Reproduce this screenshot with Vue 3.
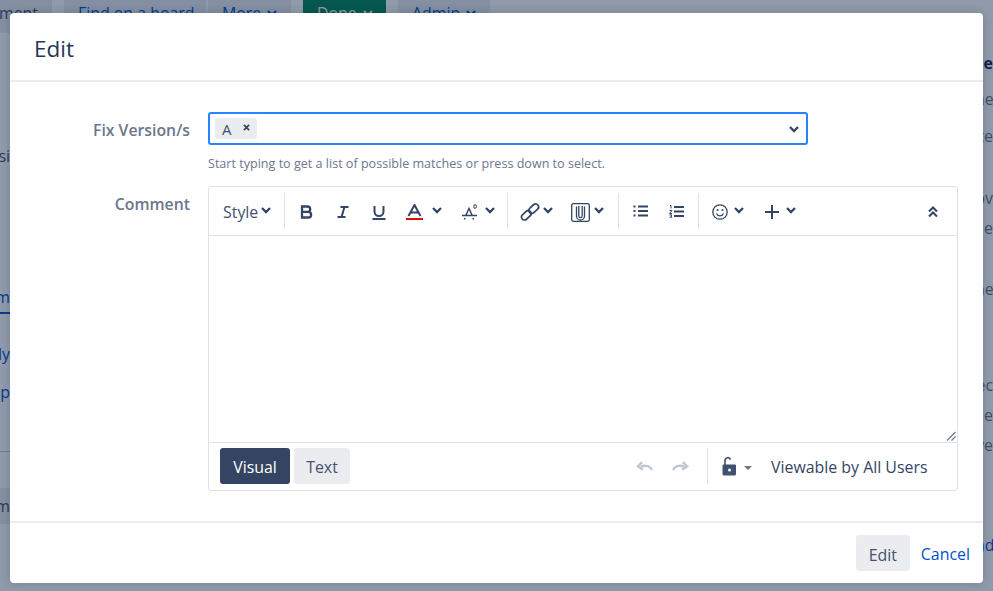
<script setup>
const navItems = [
  { label: 'Management', w: 52, cls: 'nav-first' },
  { label: 'Find on a board', w: 142, cls: 'nav-link nav-tight' },
  { label: 'More', w: 83, cls: 'nav-link', menu: true },
  { label: 'Done', w: 83, cls: 'nav-done', menu: true },
  { label: 'Admin', w: 92, cls: 'nav-link', menu: true }
]

// text showing in the strip on the left of the dialog, h = row height
const leftRows = [
  { text: '', h: 110 },
  { text: 'si', h: 30, cls: 'grey' },
  { text: '', h: 111 },
  { text: 'm', h: 30, cls: 'tab' },
  { text: '', h: 27 },
  { text: 'ly', h: 26, cls: 'blue' },
  { text: '', h: 12 },
  { text: 'p', h: 26, cls: 'blue' },
  { text: '', h: 47, cls: 'rule' },
  { text: '', h: 36 },
  { text: 'm', h: 36, cls: 'band' }
]

const rightRows = [
  { text: 'e', top: 17, cls: 'bold' },
  { text: 'ne', top: 10 },
  { text: 'te', top: 11 },
  { text: 'ov', top: 36 },
  { text: 'e', top: 4 },
  { text: 'ne', top: 35 },
  { text: 'ec', top: 70 },
  { text: 'e', top: 4 },
  { text: 've', top: 4 },
  { text: 'nd', top: 74, cls: 'blue' }
]
</script>

<template>
  <div class="page">
    <div class="behind">
      <nav class="topnav">
        <div v-for="item in navItems" :key="item.label" class="navitem" :class="item.cls" :style="{ width: item.w + 'px' }">
          <span>{{ item.label }}</span>
          <svg v-if="item.menu" class="navchev" viewBox="0 0 10 6"><path d="M1 1l4 4 4-4" /></svg>
        </div>
      </nav>
      <div class="strips">
        <div class="strip">
          <div v-for="(row, i) in leftRows" :key="i" class="leftrow" :class="row.cls" :style="{ height: row.h + 'px' }">{{ row.text }}</div>
        </div>
        <div class="strip right">
          <div v-for="(row, i) in rightRows" :key="i" class="rightrow" :class="row.cls" :style="{ marginTop: row.top + 'px' }">{{ row.text }}</div>
        </div>
      </div>
    </div>

    <div class="overlay">
      <section class="dialog">
        <header class="head">
          <h2>Edit</h2>
        </header>

        <div class="body">
          <div class="field">
            <label>Fix Version/s</label>
            <div class="control">
              <div class="select">
                <span class="chip">A
                  <svg class="chipx" viewBox="0 0 8 8"><path d="M1 1l6 6M7 1L1 7" /></svg>
                </span>
                <svg class="chev selchev" viewBox="0 0 10 6"><path d="M1 1l4 4 4-4" /></svg>
              </div>
              <p class="hint">Start typing to get a list of possible matches or press down to select.</p>
            </div>
          </div>

          <div class="field comment">
            <label>Comment</label>
            <div class="editor">
              <div class="toolbar">
                <span class="style-btn">Style</span>
                <svg class="chev" style="margin-left:3px" viewBox="0 0 10 6"><path d="M1 1l4 4 4-4" /></svg>
                <i class="sep s1"></i>

                <svg class="ico b" viewBox="0 0 14 14"><path class="thick" d="M2 1.500h5.500a2.700 2.700 0 0 1 0 5.400H2zM2 6.900h6.300a2.800 2.800 0 0 1 0 5.600H2z" /></svg>
                <svg class="ico i" viewBox="0 0 12 12"><path d="M3.500 1h8M.5 11h8M7.500 1l-3 10" class="med" /></svg>
                <svg class="ico u" viewBox="0 0 14 15"><path class="med" d="M2.500 1v5.500a4.500 4.500 0 0 0 9 0V1M0.500 14h13" /></svg>

                <span class="tool t-a">
                  <svg class="ico-a" viewBox="0 0 17 16">
                    <path class="thick2" d="M2.500 12L8.500 1l6 11M4.800 8.500h7.400" />
                    <rect class="red" x="0" y="14" width="17" height="2" />
                  </svg>
                  <svg class="chev" viewBox="0 0 10 6"><path d="M1 1l4 4 4-4" /></svg>
                </span>
                <span class="tool t-fs">
                  <svg class="ico-fs" viewBox="0 0 16 16">
                    <path class="thin2" d="M4 11l3-6.500 3 6.500M0 11.500h15" />
                    <path class="hair" d="M12 .8v3.400h1a1.700 1.700 0 0 0 0-3.400z" />
                    <path class="thin2" d="M3 14l-.6 1.500M11 14l.6 1.500" />
                  </svg>
                  <svg class="chev" viewBox="0 0 10 6"><path d="M1 1l4 4 4-4" /></svg>
                </span>
                <i class="sep"></i>

                <span class="tool t-link">
                  <svg class="ico-link" viewBox="0 0 18 16">
                    <g transform="rotate(-42 9 8)">
                      <rect class="med2" x="-1.500" y="5" width="11" height="6" rx="3" />
                      <rect class="med2" x="8.500" y="5" width="11" height="6" rx="3" />
                    </g>
                  </svg>
                  <svg class="chev" viewBox="0 0 10 6"><path d="M1 1l4 4 4-4" /></svg>
                </span>
                <span class="tool t-attach">
                  <svg class="ico-att" viewBox="0 0 19 19">
                    <rect class="thin" x=".7" y=".7" width="17.600" height="17.600" rx="1.500" />
                    <path class="thin" d="M5.500 3.500v9.500a4 4 0 0 0 8 0V3.500M7.800 3v10a1.700 1.700 0 0 0 3.400 0V3" />
                  </svg>
                  <svg class="chev" viewBox="0 0 10 6"><path d="M1 1l4 4 4-4" /></svg>
                </span>
                <i class="sep s3"></i>

                <svg class="ico-list bul" viewBox="0 0 15 12">
                  <path class="med" d="M5 1.500h10M5 6h10M5 10.500h10" />
                  <path class="med" d="M.5 1.500h2M.5 6h2M.5 10.500h2" />
                </svg>
                <svg class="ico-list num" viewBox="0 0 15 13">
                  <path class="med" d="M5 2h10M5 6.500h10M5 11h10" />
                  <path class="hair" d="M1 .5h1v3M.5 5.500h2.500L.5 8.500H3M.5 10h2.500l-1 1 1 1.200H.5" />
                </svg>
                <i class="sep s4"></i>

                <span class="tool t-smile">
                  <svg class="ico-smile" viewBox="0 0 16 16">
                    <circle class="thin ring" cx="8" cy="8" r="7.200" />
                    <path class="thin" d="M4.500 9.500a3.800 3.800 0 0 0 7 0" />
                    <circle cx="5.500" cy="6" r="1" class="dot" />
                    <circle cx="10.500" cy="6" r="1" class="dot" />
                  </svg>
                  <svg class="chev" viewBox="0 0 10 6"><path d="M1 1l4 4 4-4" /></svg>
                </span>
                <span class="tool t-plus">
                  <svg class="ico-plus" viewBox="0 0 14 14"><path class="med" d="M7 0v14M0 7h14" /></svg>
                  <svg class="chev" viewBox="0 0 10 6"><path d="M1 1l4 4 4-4" /></svg>
                </span>

                <svg class="ico-collapse" viewBox="0 0 12 12"><path d="M2 5.500l4-4 4 4M2 10.500l4-4 4 4" /></svg>
              </div>

              <div class="textarea">
                <svg class="grip" viewBox="0 0 10 10"><path d="M9.500 1L1 9.500M9.500 5.500L5.500 9.500" /></svg>
              </div>

              <div class="modes">
                <button class="mode on">Visual</button>
                <button class="mode">Text</button>
                <svg class="hist first" viewBox="0 0 17 10"><path d="M16 9c-1.500-3.500-6-5.500-11-3.500" /><path d="M6 1.200L2 5.500l5 3" /></svg>
                <svg class="hist" viewBox="0 0 17 10"><path d="M1 9c1.500-3.500 6-5.500 11-3.500" /><path d="M11 1.200l4 4.300-5 3" /></svg>
                <i class="sep tall"></i>
                <svg class="lock" viewBox="0 0 15 20">
                  <path class="shackle" d="M3 9V4.500a2.800 2.800 0 0 1 5.500-.8" />
                  <path class="body-lock" fill-rule="evenodd" d="M1.500 8.500h11.500a1 1 0 0 1 1 1V18a1.500 1.500 0 0 1-1.500 1.500H2A1.500 1.500 0 0 1 .5 18V9.500a1 1 0 0 1 1-1zM7.500 12.500a1.500 1.500 0 1 0 0 3 1.500 1.500 0 0 0 0-3z" />
                </svg>
                <span class="caret"></span>
                <span class="viewable">Viewable by All Users</span>
              </div>
            </div>
          </div>
        </div>

        <footer class="foot">
          <button class="submit">Edit</button>
          <a class="cancel">Cancel</a>
        </footer>
      </section>
    </div>
  </div>
</template>

<style>
html, body { margin: 0; height: 100%; overflow: hidden; }
</style>

<style scoped>
.page {
  width: 993px;
  height: 591px;
  position: relative;
  overflow: hidden;
  background: #fff;
  font-family: "Open Sans", "Liberation Sans", sans-serif;
  color: #344563;
}

.behind {
  height: 100%;
  display: flex;
  flex-direction: column;
  font-size: 15.9px;
}
.topnav {
  display: flex;
  gap: 12px;
  height: 33px;
  white-space: nowrap;
  overflow: hidden;
}
.navitem {
  background: #ebecf0;
  overflow: hidden;
  box-sizing: border-box;
  padding-left: 14px;
  flex: none;
  display: flex;
  align-items: center;
  gap: 6px;
  height: 33px;
  padding-bottom: 7px;
}
.nav-tight { margin-right: -10px; }
.nav-first { padding-left: 0; padding-right: 14px; justify-content: flex-end; color: #42526e; }
.nav-link { color: #0052cc; }
.nav-done { background: #00875a; color: #fff; }
.navchev { width: 10px; height: 6px; fill: none; stroke: currentColor; stroke-width: 2; }
.strips { flex: 1; display: flex; justify-content: space-between; }
.strip { width: 10px; overflow: hidden; }
.strip.right { width: 18px; }
.leftrow { direction: rtl; line-height: 26px; }
.leftrow.grey { color: #42526e; }
.leftrow.tab { color: #0052cc; border-bottom: 2px solid #0052cc; box-sizing: border-box; }
.leftrow.blue { color: #0052cc; }
.leftrow.rule { border-bottom: 1px solid #c1c7d0; box-sizing: border-box; }
.leftrow.band { background: #ebecf0; line-height: 36px; color: #42526e; }
.rightrow { line-height: 26px; height: 26px; white-space: nowrap; color: #6b778c; text-align: right; }
.rightrow.bold { font-weight: 700; color: #172b4d; }
.rightrow.blue { color: #0052cc; }

.overlay {
  position: absolute;
  inset: 0;
  background: rgba(9, 30, 66, 0.45);
  display: flex;
  padding: 13px 10px 8px 10px;
  box-sizing: border-box;
}
.dialog {
  flex: 1;
  background: #fff;
  border-radius: 4px;
  display: flex;
  flex-direction: column;
  box-shadow: 0 0 10px rgba(9, 30, 66, 0.2);
}

.head {
  height: 69px;
  box-sizing: border-box;
  border-bottom: 2px solid #ebecf0;
  padding-left: 24px;
  flex: none;
}
.head h2 {
  margin: 0;
  font-size: 22.5px;
  font-weight: 400;
  line-height: 71px;
  color: #253858;
}

.body { flex: 1; padding-top: 30px; }
.field { display: flex; align-items: flex-start; }
.field label {
  width: 180px;
  flex: none;
  text-align: right;
  font-size: 15.8px;
  font-weight: 600;
  color: #6b778c;
  line-height: 36px;
}
.control { margin-left: 18px; width: 600px; }
.select {
  height: 33px;
  box-sizing: border-box;
  border: 2px solid #2684ff;
  border-radius: 3px;
  display: flex;
  align-items: center;
  padding-left: 5px;
  padding-right: 7px;
  justify-content: space-between;
}
.chip {
  height: 21px;
  width: 42px;
  box-sizing: border-box;
  background: #ebecf0;
  border-radius: 3px;
  display: flex;
  align-items: center;
  padding-left: 7px;
  font-size: 15px;
  color: #42526e;
  position: relative;
}
.chipx { width: 7px; height: 7px; position: absolute; left: 28px; top: 6px; fill: none; stroke: #344563; stroke-width: 2; }
.hint { margin: 10px 0 0; font-size: 12.57px; line-height: 18px; color: #6b778c; }

.comment { margin-top: 13px; }
.comment label { line-height: 36px; }
.editor {
  margin-left: 18px;
  width: 750px;
  height: 305px;
  box-sizing: border-box;
  border: 1px solid #dfe1e6;
  border-radius: 3px;
  display: flex;
  flex-direction: column;
}

svg { flex: none; display: block; }
svg path, svg rect, svg circle { fill: none; }
.chev { width: 10px; height: 6px; fill: none; stroke: #344563; stroke-width: 2.300; overflow: visible; }
.toolbar .chev { margin-top: -3px; }
.thick { stroke: #344563; stroke-width: 2.300; }
.thick2 { stroke: #344563; stroke-width: 2; }
.med { stroke: #344563; stroke-width: 2; }
.med2 { stroke: #344563; stroke-width: 1.700; }
.thin { stroke: #344563; stroke-width: 1.300; }
.thin2 { stroke: #344563; stroke-width: 1.500; }
.hair { stroke: #344563; stroke-width: 1; }
svg .dot { fill: #344563; }
svg .red { fill: #de0b0b; }

.toolbar {
  height: 49px;
  flex: none;
  box-sizing: border-box;
  border-bottom: 1px solid #dfe1e6;
  display: flex;
  align-items: center;
  padding-left: 14px;
  padding-right: 18px;
}
.style-btn { font-size: 15.9px; color: #42526e; margin-top: 2px; }
.sep { width: 1px; height: 36px; background: #dfe1e6; flex: none; }
.s1 { margin-left: 13px; }
.tool { display: flex; align-items: center; flex: none; }
.ico { flex: none; stroke: #344563; margin-top: 2px; }
.b { width: 14px; height: 14px; margin-left: 15px; }
.i { width: 12px; height: 12px; margin-left: 23px; }
.u { width: 14px; height: 15px; margin-left: 23px; }
.t-a { margin-left: 20px; gap: 9px; }
.ico-a { width: 17px; height: 16px; margin-top: 2px; }
.t-fs { margin-left: 20px; gap: 7px; margin-right: 12px; }
.ico-fs { width: 16px; height: 16px; margin-top: 2px; }
.t-link { margin-left: 13px; gap: 4px; }
.ico-link { width: 18px; height: 16px; margin-top: 2px; overflow: visible; }
.t-attach { margin-left: 18px; gap: 4px; }
.ico-att { width: 19px; height: 19px; margin-top: 2px; }
.s3 { margin-left: 14px; }
.ico-list { width: 15px; height: 12px; }
.bul { margin-left: 14px; }
.num { margin-left: 21px; height: 13px; }
.s4 { margin-left: 14px; }
.t-smile { margin-left: 13px; gap: 6px; }
.ico-smile { width: 16px; height: 16px; margin-top: 2px; }
.t-plus { margin-left: 21px; gap: 7px; }
.ico-plus { width: 14px; height: 14px; margin-top: 2px; }
.ico-collapse { width: 12px; height: 12px; margin-left: auto; margin-top: 2px; fill: none; stroke: #344563; stroke-width: 2; }

.textarea { flex: 1; position: relative; border-bottom: 1px solid #dfe1e6; }
.grip { position: absolute; right: 1px; bottom: 1px; width: 10px; height: 10px; fill: none; stroke: #6b778c; stroke-width: 1.200; }

.modes {
  height: 47px;
  flex: none;
  display: flex;
  align-items: center;
  padding-left: 11px;
  box-sizing: border-box;
  padding-bottom: 1px;
}
.mode {
  height: 36px;
  border: 0;
  border-radius: 3px;
  background: #ebecf0;
  font: inherit;
  font-size: 15.9px;
  color: #42526e;
  width: 56px;
  padding: 2px 0 0;
  margin-left: 4px;
}
.mode.on { background: #344563; color: #fff; width: 70px; margin-left: 0; font-weight: 500; }
.hist { width: 17px; height: 10px; fill: none; stroke: #c1c7d0; stroke-width: 2.500; margin-left: 19px; }
.hist.first { margin-left: 286px; }
.sep.tall { margin-left: 18px; }
.lock { width: 15px; height: 20px; margin-left: 14px; }
.shackle { stroke: #42526e; stroke-width: 1.600; }
svg .body-lock { fill: #42526e; }
.caret { width: 0; height: 0; border: 4px solid transparent; border-top: 4px solid #6b778c; border-bottom: 0; margin-left: 7px; margin-top: 3px; }
.viewable { margin-left: 19px; font-size: 15.9px; color: #344563; white-space: nowrap; margin-top: 1px; }

.foot {
  height: 62px;
  flex: none;
  box-sizing: border-box;
  border-top: 2px solid #ebecf0;
  display: flex;
  align-items: center;
  justify-content: flex-end;
  padding-right: 13px;
}
.submit {
  width: 54px;
  height: 36px;
  border: 0;
  border-radius: 3px;
  background: #ebecf0;
  font: inherit;
  font-size: 15.9px;
  color: #42526e;
  padding: 4px 0 0;
}
.cancel { margin-left: 11px; font-size: 15.9px; color: #0052cc; margin-top: 2px; }
</style>
